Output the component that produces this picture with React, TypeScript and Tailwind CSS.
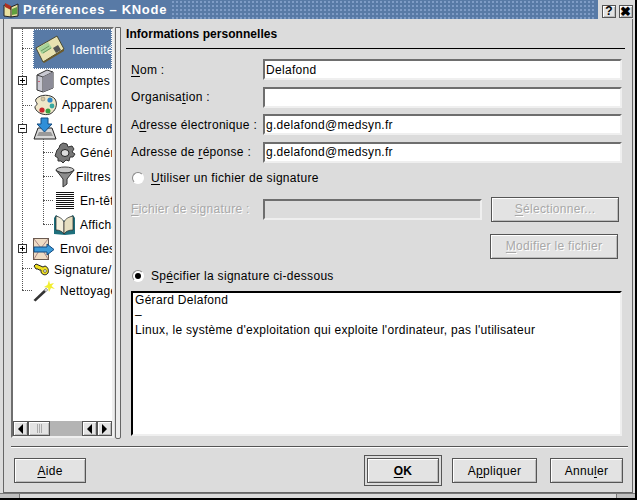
import type { ReactNode } from 'react';

const bevel = 'border border-[#555] bg-[#e3e3e3] shadow-[inset_1px_1px_0_#fff,inset_-1px_-1px_0_#bbb]';
const sunken = 'border-2 border-t-[#6e6e6e] border-l-[#6e6e6e] border-r-[#efefef] border-b-[#efefef]';

function IdCard() {
  return (
    <svg width="30" height="28" viewBox="0 0 30 28" className="shrink-0">
      <path d="M1 13 L22 1 L29 14 L8 27 Z" fill="#e9e2b0" stroke="#4a4a30" />
      <path d="M3 13 L13 7 L17 13 L7 19 Z" fill="#a8d49a" />
      <path d="M6 16 L14 11 M8 18 L16 13" stroke="#6b9a60" />
      <path d="M18 13 L23 10 L26 15 L21 18 Z" fill="#555" />
      <path d="M8 27 L29 14 L29 16 L9 28 Z" fill="#6d5a2a" />
    </svg>
  );
}

function Server() {
  return (
    <svg width="18" height="24" viewBox="0 0 18 24">
      <path d="M1 6 L11 1 L17 3 L17 19 L7 23 L1 21 Z" fill="#c9c9d2" stroke="#333" />
      <path d="M1 6 L7 8 L17 3 M7 8 L7 23" stroke="#444" fill="none" />
      <path d="M7 8 L17 3 L17 19 L7 23 Z" fill="#8c8c98" />
      <path d="M3 12 L3 13" stroke="#c02" />
    </svg>
  );
}

function Palette() {
  return (
    <svg width="24" height="22" viewBox="0 0 24 22">
      <path d="M3 5 C7 0 18 0 22 5 C25 10 23 17 17 20 C11 22 4 19 2 14 C1 12 5 11 4 9 C3 8 2 7 3 5 Z" fill="#efe6c8" stroke="#333" />
      <circle cx="17" cy="6" r="2.6" fill="#2f86c8" />
      <circle cx="19" cy="12" r="2.4" fill="#38a8a0" />
      <circle cx="15" cy="17" r="2.5" fill="#3aa040" />
      <circle cx="9" cy="16" r="2.6" fill="#c8242c" />
      <circle cx="10" cy="5" r="2" fill="#d8c8a0" stroke="#777" strokeWidth="0.5" />
    </svg>
  );
}

function Inbox() {
  return (
    <svg width="24" height="24" viewBox="0 0 24 24">
      <path d="M1 22 L5 11 L19 11 L23 22 Z" fill="#d8d8d8" stroke="#222" />
      <path d="M6 15 L18 15 L20 19 L4 19 Z" fill="#9a9a9a" />
      <path d="M8 1 L15 1 L15 7 L19 7 L11.5 15 L4 7 L8 7 Z" fill="#2f8fd8" stroke="#124a80" />
    </svg>
  );
}

function Gear() {
  return (
    <svg width="22" height="22" viewBox="0 0 22 22">
      <path d="M9 1 L13 2 L14 5 L18 4 L20 7 L18 10 L21 12 L19 15 L16 15 L15 19 L12 18 L9 21 L7 19 L4 19 L4 16 L1 14 L2 11 L3 8 L5 6 L6 3 Z" fill="#777" stroke="#333" />
      <ellipse cx="11" cy="11" rx="4" ry="3.5" fill="#dcdcdc" stroke="#222" />
    </svg>
  );
}

function Funnel() {
  return (
    <svg width="20" height="22" viewBox="0 0 20 22">
      <ellipse cx="10" cy="4" rx="9" ry="3" fill="#c9c9c9" stroke="#444" />
      <path d="M1 4 L8 13 L8 21 L12 18 L12 13 L19 4 C15 8 5 8 1 4 Z" fill="#8d8d8d" stroke="#333" />
    </svg>
  );
}

function Lines() {
  return (
    <svg width="18" height="18" viewBox="0 0 18 18">
      {[1, 3, 5, 7, 9, 11, 13, 15, 17].map(y => (
        <path key={y} d={`M0 ${y - 0.5} H18`} stroke="#111" />
      ))}
    </svg>
  );
}

function Book() {
  return (
    <svg width="23" height="22" viewBox="0 0 23 22">
      <path d="M3 1 L11 7 L20 1 L22 4 L22 20 L12 21 L1 20 L1 4 Z" fill="#1e6f7c" />
      <path d="M3 2 C6 3 9 4 11 8 L11 20 C9 17 6 16 3 16 Z" fill="#f4f0dc" stroke="#222" strokeWidth="0.7" />
      <path d="M20 2 C16 3 13 4 11 8 L11 20 C13 17 16 16 20 16 Z" fill="#e6dfc0" stroke="#222" strokeWidth="0.7" />
    </svg>
  );
}

function Send() {
  return (
    <svg width="22" height="22" viewBox="0 0 22 22">
      <rect x="0.5" y="0.5" width="15" height="21" fill="#efdcc4" stroke="#6a5a50" />
      <path d="M1 1 L8 10 L15 1 M1 21 L7 11 M15 21 L9 11" stroke="#a88" fill="none" />
      <path d="M1 9 L14 9 L14 6 L21 11.5 L14 17 L14 14 L1 14 Z" fill="#3c9ad8" stroke="#124a80" />
    </svg>
  );
}

function Key() {
  return (
    <svg width="17" height="14" viewBox="0 0 17 14">
      <path d="M1 3 L3 1 L10 4 L12 3 C15 4 16 7 15 10 C13 13 9 12 8 9 L8 7 L6 7 L5 6 L3 6 Z" fill="#f0e020" stroke="#222" />
      <circle cx="12" cy="8" r="1.4" fill="#fff" stroke="#222" strokeWidth="0.6" />
    </svg>
  );
}

function Wand() {
  return (
    <svg width="22" height="22" viewBox="0 0 22 22">
      <path d="M0.5 20 L13 8 L15 10 L2.5 21.5 Z" fill="#333" />
      <path d="M11 10 L13 8 L15 10 L13 12 Z" fill="#ccc" />
      <path d="M16 0 L17 4 L21 3 L18.5 6 L22 9 L18 8 L16 12 L15 8 L11 7 L14.5 5 Z" fill="#f2ee30" />
    </svg>
  );
}

type Node = { label: string; icon: ReactNode; h: string; pad: string; gap: string; iw: string };

const rows: Node[] = [
  { label: 'Comptes', icon: <Server />, h: 'h-6', pad: 'pl-[23px]', gap: 'gap-[6px]', iw: 'w-[18px]' },
  { label: 'Apparence', icon: <Palette />, h: 'h-6', pad: 'pl-[20px]', gap: 'gap-[5px]', iw: 'w-[24px]' },
  { label: 'Lecture des', icon: <Inbox />, h: 'h-6', pad: 'pl-[20px]', gap: 'gap-[3px]', iw: 'w-[24px]' },
  { label: 'Général', icon: <Gear />, h: 'h-6', pad: 'pl-[41px]', gap: 'gap-[4px]', iw: 'w-[22px]' },
  { label: 'Filtres', icon: <Funnel />, h: 'h-6', pad: 'pl-[42px]', gap: 'gap-[1px]', iw: 'w-[20px]' },
  { label: 'En-têtes', icon: <Lines />, h: 'h-6', pad: 'pl-[43px]', gap: 'gap-[6px]', iw: 'w-[18px]' },
  { label: 'Affichage', icon: <Book />, h: 'h-6', pad: 'pl-[40px]', gap: 'gap-[4px]', iw: 'w-[23px]' },
  { label: 'Envoi des', icon: <Send />, h: 'h-6', pad: 'pl-[20px]', gap: 'gap-[5px]', iw: 'w-[22px]' },
  { label: 'Signature/', icon: <Key />, h: 'h-[18px]', pad: 'pl-[20px]', gap: 'gap-[4px]', iw: 'w-[17px]' },
  { label: 'Nettoyage', icon: <Wand />, h: 'h-6', pad: 'pl-[20px]', gap: 'gap-[5px]', iw: 'w-[22px]' },
];

function Expander({ top, minus }: { top: string; minus?: boolean }) {
  return (
    <div className={`absolute left-[5px] flex h-[9px] w-[9px] items-center justify-center border border-[#333] bg-white ${top}`}>
      <div className="relative h-[1px] w-[5px] bg-black">
        {!minus && <div className="absolute left-[2px] top-[-2px] h-[5px] w-[1px] bg-black" />}
      </div>
    </div>
  );
}

function Arrow({ right }: { right?: boolean }) {
  return (
    <div className={`${bevel} flex h-full w-[15px] shrink-0 items-center justify-center`}>
      <div
        className={
          right
            ? 'border-y-[5px] border-l-[5px] border-y-transparent border-l-black'
            : 'border-y-[5px] border-r-[5px] border-y-transparent border-r-black'
        }
      />
    </div>
  );
}

function Tree() {
  return (
    <div className={`${sunken} relative flex h-[411px] w-[103px] shrink-0 flex-col overflow-hidden bg-white`}>
      <div className="relative flex-1 overflow-hidden">
        <div className="ml-[20px] flex h-[40px] w-[79px] items-center overflow-hidden border border-dotted border-white bg-[#587aa6] pl-[1px]">
          <IdCard />
          <span className="ml-[7px] mt-[2px] whitespace-nowrap text-white">Identité</span>
        </div>
        {rows.map(r => (
          <div key={r.label} className={`flex items-center whitespace-nowrap ${r.h} ${r.pad} ${r.gap}`}>
            <div className={`flex shrink-0 justify-center ${r.iw}`}>{r.icon}</div>
            <span>{r.label}</span>
          </div>
        ))}
        {/* dotted guides and expanders lie over the rows */}
        <div className="absolute left-[9px] top-0 h-[261px] border-l border-dotted border-[#555]" />
        <div className="absolute left-[9px] top-[19px] w-[10px] border-t border-dotted border-[#555]" />
        <div className="absolute left-[9px] top-[76px] w-[10px] border-t border-dotted border-[#555]" />
        <div className="absolute left-[9px] top-[239px] w-[10px] border-t border-dotted border-[#555]" />
        <div className="absolute left-[9px] top-[261px] w-[10px] border-t border-dotted border-[#555]" />
        <div className="absolute left-[30px] top-[110px] h-[85px] border-l border-dotted border-[#555]" />
        <div className="absolute left-[30px] top-[123px] w-[10px] border-t border-dotted border-[#555]" />
        <div className="absolute left-[30px] top-[147px] w-[10px] border-t border-dotted border-[#555]" />
        <div className="absolute left-[30px] top-[171px] w-[10px] border-t border-dotted border-[#555]" />
        <div className="absolute left-[30px] top-[195px] w-[10px] border-t border-dotted border-[#555]" />
        <Expander top="top-[47px]" />
        <Expander top="top-[95px]" minus />
        <Expander top="top-[215px]" />
      </div>
      <div className="flex h-[15px] shrink-0 bg-[#b4b4b4]">
        <Arrow />
        <div className={`${bevel} flex w-[22px] shrink-0 items-center justify-center gap-[1px]`}>
          <div className="h-[9px] w-[1px] bg-[#aaa]" />
          <div className="h-[9px] w-[1px] bg-[#aaa]" />
          <div className="h-[9px] w-[1px] bg-[#aaa]" />
        </div>
        <div className="flex-1" />
        <Arrow />
        <Arrow right />
      </div>
    </div>
  );
}

function U({ children }: { children: ReactNode }) {
  return <span className="underline underline-offset-2">{children}</span>;
}

function Field({ label, value }: { label: ReactNode; value?: string }) {
  return (
    <div className="flex h-[21px] items-center">
      <div className="w-[132px] shrink-0 whitespace-nowrap">{label}</div>
      <div className={`${sunken} flex h-full w-[359px] items-center bg-white pl-[1px] text-black`}>{value}</div>
    </div>
  );
}

function Radio({ on, children }: { on?: boolean; children: ReactNode }) {
  return (
    <div className="flex h-[16px] items-center gap-[7px]">
      <div className="flex h-[12px] w-[12px] items-center justify-center rounded-full border border-[#888] border-r-white border-b-white bg-white">
        {on && <div className="h-[6px] w-[6px] rounded-full bg-black" />}
      </div>
      <span>{children}</span>
    </div>
  );
}

function Btn({ w, disabled, children }: { w: string; disabled?: boolean; children: ReactNode }) {
  return (
    <div
      className={`${bevel} flex h-[25px] items-center justify-center ${w} ${disabled ? 'text-[#a8a8a8] [text-shadow:1px_1px_0_#fff]' : 'text-black'}`}
    >
      {children}
    </div>
  );
}

export default function App() {
  return (
    <div className="flex h-[500px] w-[637px] flex-col overflow-hidden border-r-2 border-b-2 border-r-black border-b-black bg-[#dcdcdc] font-['Liberation_Sans',sans-serif] text-[12px] leading-none tracking-[0.3px] text-black">
      {/* title bar */}
      <div className="flex h-[19px] shrink-0 items-center bg-[#587aa6] pl-[3px]">
        <svg width="16" height="16" viewBox="0 0 16 16" className="shrink-0">
          <path d="M1 3 L8 5 L15 2 L15 14 L8 15 L1 14 Z" fill="#e8e0a0" stroke="#222" />
          <path d="M2 1 L8 4 L8 8 L2 5 Z" fill="#b03020" />
          <path d="M8 5 L8 15" stroke="#222" />
          <path d="M9 7 L14 5 L14 12 L9 13 Z" fill="#60a040" />
        </svg>
        <div className="ml-[4px] whitespace-nowrap text-[13px] font-bold tracking-[0.7px] text-white">Préférences – KNode</div>
        <div className="mx-[4px] h-full flex-1 bg-[radial-gradient(#7f9cc6_1px,transparent_1px)] [background-size:4px_4px]" />
        <div className="flex h-full w-[37px] shrink-0 items-center gap-[3px] bg-[#dcdcdc] pl-[4px] pt-[3px]">
          <div className={`${bevel} flex h-[13px] w-[14px] items-center justify-center text-[12px] font-bold`}>?</div>
          <div className={`${bevel} flex h-[13px] w-[14px] items-center justify-center text-[13px] font-bold`}>✖</div>
        </div>
      </div>

      {/* client area */}
      <div className="ml-[3px] mr-[2px] flex min-h-0 flex-1 flex-col border-x border-b border-[#666] px-[7px] pt-[8px]">
        <div className="flex h-[414px] shrink-0">
          <Tree />
          <div className="ml-[1px] h-[412px] w-[6px] shrink-0 rounded-b-[2px] border border-[#666] bg-[#ececec]" />
          <div className="ml-[5px] flex w-[500px] flex-col">
            <div className="flex h-[22px] items-start border-b border-black pt-[1px] text-[12px] font-bold tracking-[0.05px]">
              Informations personnelles
            </div>
            <div className="flex flex-col gap-[6.5px] pl-[5px] pt-[10px]">
              <Field label={<><U>N</U>om :</>} value="Delafond" />
              <Field label={<>Organisa<U>t</U>ion :</>} />
              <Field label={<>A<U>d</U>resse électronique :</>} value="g.delafond@medsyn.fr" />
              <Field label={<>Adresse de <U>r</U>éponse :</>} value="g.delafond@medsyn.fr" />
            </div>
            <div className="pl-[6px] pt-[7px]">
              <Radio><U>U</U>tiliser un fichier de signature</Radio>
            </div>
            <div className="flex items-center pl-[5px] pt-[11px]">
              <div className="w-[132px] whitespace-nowrap text-[#a8a8a8] [text-shadow:1px_1px_0_#fff]"><U>F</U>ichier de signature :</div>
              <div className={`${sunken} h-[21px] w-[219px] bg-[#dcdcdc]`} />
              <div className="ml-[9px]"><Btn w="w-[128px]" disabled><U>S</U>électionner...</Btn></div>
            </div>
            <div className="flex justify-end pr-[7px] pt-[12px]">
              <Btn w="w-[128px]" disabled><U>M</U>odifier le fichier</Btn>
            </div>
            <div className="pl-[6px] pt-[9px]">
              <Radio on>Sp<U>é</U>cifier la signature ci-dessous</Radio>
            </div>
            <div className="ml-[5px] mt-[7px] h-[145px] w-[491px] border-2 border-t-black border-l-black border-r-[#efefef] border-b-[#efefef] bg-white pl-[2px] leading-[15px] text-black">
              <div>Gérard Delafond</div>
              <div>–</div>
              <div className="whitespace-nowrap">Linux, le système d'exploitation qui exploite l'ordinateur, pas l'utilisateur</div>
            </div>
          </div>
        </div>

        <div className="mt-[5px] h-[2px] w-[617px] border-t border-b border-t-[#555] border-b-white" />

        <div className="mt-[7px] flex items-center">
          <div className="ml-[3px]"><Btn w="w-[72px]"><U>A</U>ide</Btn></div>
          <div className="ml-[278px] border border-[#555] p-[2px]">
            <div className={`${bevel} flex h-[25px] w-[72px] items-center justify-center font-bold`}><U>O</U>K</div>
          </div>
          <div className="ml-[10px]"><Btn w="w-[85px]">A<U>p</U>pliquer</Btn></div>
          <div className="ml-[13px]"><Btn w="w-[73px]">Annu<U>l</U>er</Btn></div>
        </div>
      </div>

      {/* resize handle */}
      <div className="flex h-[5px] shrink-0 border-t border-[#777]">
        <div className="w-[20px] border-r border-[#777] bg-[#c0c0c0]" />
        <div className="flex-1 bg-[#dcdcdc]" />
        <div className="w-[19px] border-l border-[#777] bg-[#c0c0c0]" />
      </div>
    </div>
  );
}
